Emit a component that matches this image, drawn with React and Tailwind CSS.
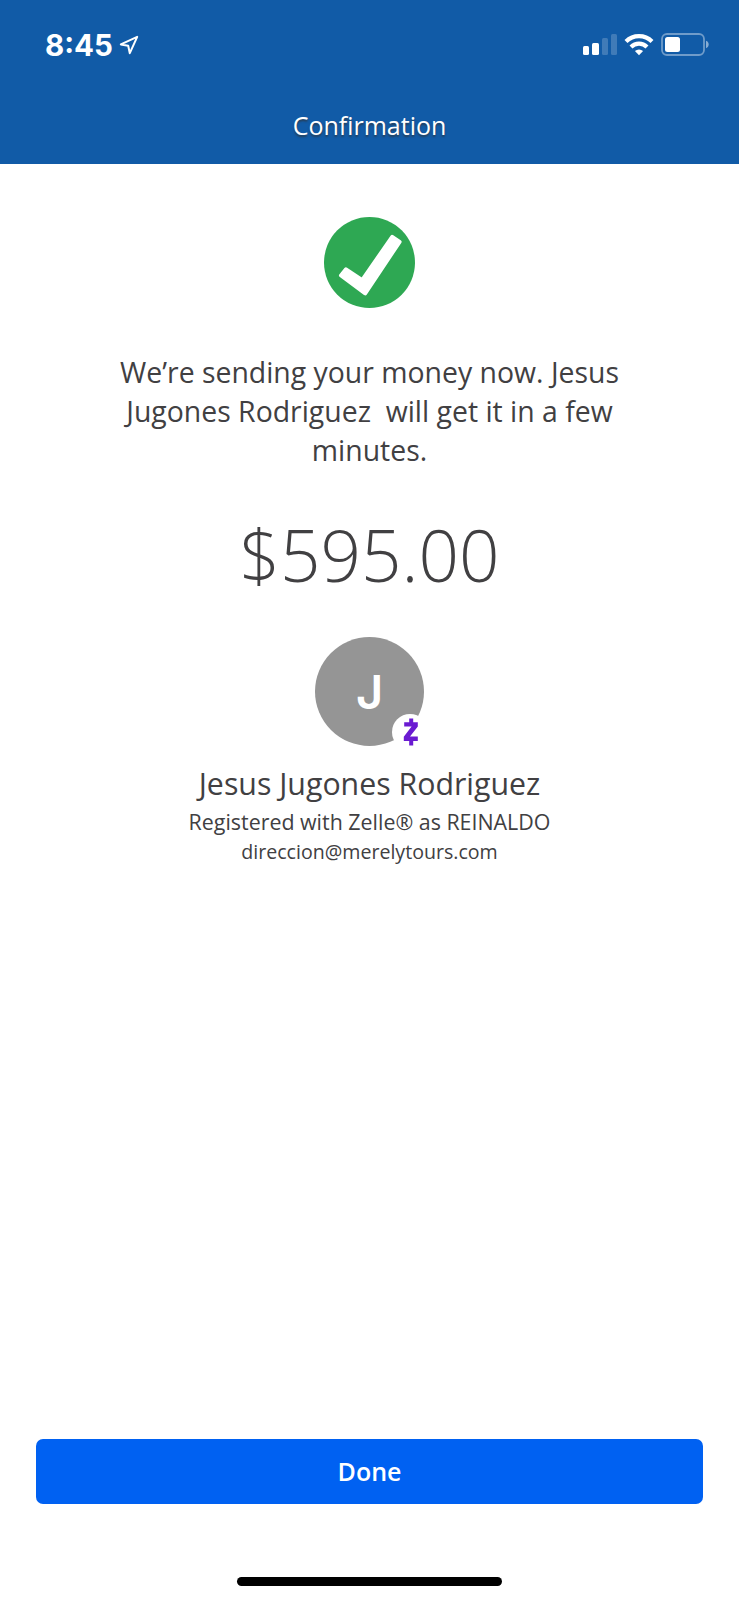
import clsx from 'clsx';

const signalBars = [
  { height: 'h-[9px]', active: true },
  { height: 'h-3', active: true },
  { height: 'h-[17px]', active: false },
  { height: 'h-[21px]', active: false },
];

const payment = {
  amount: '$595.00',
  initial: 'J',
  name: 'Jesus Jugones Rodriguez',
  registeredAs: 'Registered with Zelle® as REINALDO',
  email: 'direccion@merelytours.com',
};

const StatusBar = () => (
  <div className="flex h-[88px] items-start justify-between pl-[45px] pr-[29px] pt-[33px]">
    <div className="flex items-center gap-[6px]">
      <span className="pt-px font-['Inter',sans-serif] text-[29.5px] font-bold leading-[23px] text-white">8:45</span>
      <svg width="20" height="20" viewBox="0 0 20 20" fill="none">
        <path d="M18.2 1.8 1.8 9.4l7.4 1.4 1.6 7.4z" stroke="white" strokeWidth="2" strokeLinejoin="round" />
      </svg>
    </div>

    <div className="flex items-center">
      <div className="flex h-[21px] items-end gap-[3px]">
        {signalBars.map((bar, i) => (
          <span
            key={i}
            className={clsx('w-[6.2px] rounded-[1.5px]', bar.height, bar.active ? 'bg-white' : 'bg-white/20')}
          />
        ))}
      </div>
      <svg className="ml-[7px]" width="30" height="23" viewBox="0 0 30 23" fill="none" stroke="white" strokeWidth="4.2">
        <path d="M2 8.6a18.4 18.4 0 0 1 26 0" />
        <path d="M7 13.9a11.4 11.4 0 0 1 16 0" />
        <path d="M15 22.3 10.9 18.1a5.9 5.9 0 0 1 8.2 0z" fill="white" stroke="none" />
      </svg>
      <svg className="ml-[7px]" width="49" height="23" viewBox="0 0 49 23">
        <rect x="1" y="1" width="42" height="21" rx="5" fill="none" stroke="white" strokeOpacity="0.4" strokeWidth="1.8" />
        <rect x="4" y="4" width="15" height="15" rx="2.5" fill="white" />
        <path d="M45 7.8c3.6 1.2 3.6 6.2 0 7.4z" fill="white" fillOpacity="0.5" />
      </svg>
    </div>
  </div>
);

const SuccessIcon = () => (
  <svg width="91" height="91" viewBox="0 0 91 91">
    <circle cx="45.5" cy="45.5" r="45.5" fill="#2ea853" />
    <path
      d="M17 58.5 22 52.3 38.2 63.2 68.2 19.8 75.6 24.8 41.2 76.3z"
      fill="white"
      stroke="white"
      strokeWidth="4"
      strokeLinejoin="round"
    />
  </svg>
);

const Avatar = ({ initial }) => (
  <div className="relative flex h-[109px] w-[109px] items-center justify-center rounded-full bg-[#959595]">
    <span className="font-['Inter',sans-serif] text-[47px] font-semibold leading-none text-white">{initial}</span>
    {/* Zelle badge */}
    <div className="absolute -bottom-1 -right-1 flex h-9 w-9 items-center justify-center rounded-full bg-white">
      <svg className="ml-[2px]" width="16" height="28" viewBox="0 0 16 28" fill="none">
        <path d="M1.2 4.2H14.8V8.4L7 18.6H14.8V23H0.8V18.8L8.6 8.6H1.2z" fill="#6a1bd1" />
        <path d="M8.2 0.5V5M8.2 22V27.5" stroke="#6a1bd1" strokeWidth="4" />
      </svg>
    </div>
  </div>
);

const App = () => {
  return (
    <div className="flex h-[1600px] w-[739px] flex-col bg-white font-['Open_Sans',sans-serif] text-[#414042]">
      <header className="h-[164px] bg-[#115ba7]">
        <StatusBar />
        <h1 className="pt-[17px] text-center text-[25px] leading-10 text-white [text-shadow:0_2px_2px_rgba(50,50,50,0.7)]">
          Confirmation
        </h1>
      </header>

      <main className="flex flex-1 flex-col items-center pt-[53px]">
        <SuccessIcon />

        <p className="mt-[45px] whitespace-pre text-center text-[28.4px] leading-[39px]">
          <span className="block">We’re sending your money now. Jesus</span>
          <span className="block">{'Jugones Rodriguez  will get it in a few'}</span>
          <span className="block">minutes.</span>
        </p>

        <p className="mt-[37px] text-[71px] font-light leading-[96px]">{payment.amount}</p>

        <div className="mt-[34px]">
          <Avatar initial={payment.initial} />
        </div>

        <h2 className="mt-[18px] text-[30.3px] leading-[40px]">{payment.name}</h2>
        <p className="mt-[3px] text-[21.4px] leading-[30px]">{payment.registeredAs}</p>
        <p className="text-[19.6px] leading-[30px]">{payment.email}</p>
      </main>

      <footer className="flex flex-col items-center px-9 pb-[14px]">
        <button className="h-[65px] w-full rounded-[7px] bg-[#0061f2] pt-px text-[25px] font-semibold text-white">
          Done
        </button>
        <div className="mt-[73px] h-[9px] w-[265px] rounded-full bg-black" />
      </footer>
    </div>
  );
};

export default App;
